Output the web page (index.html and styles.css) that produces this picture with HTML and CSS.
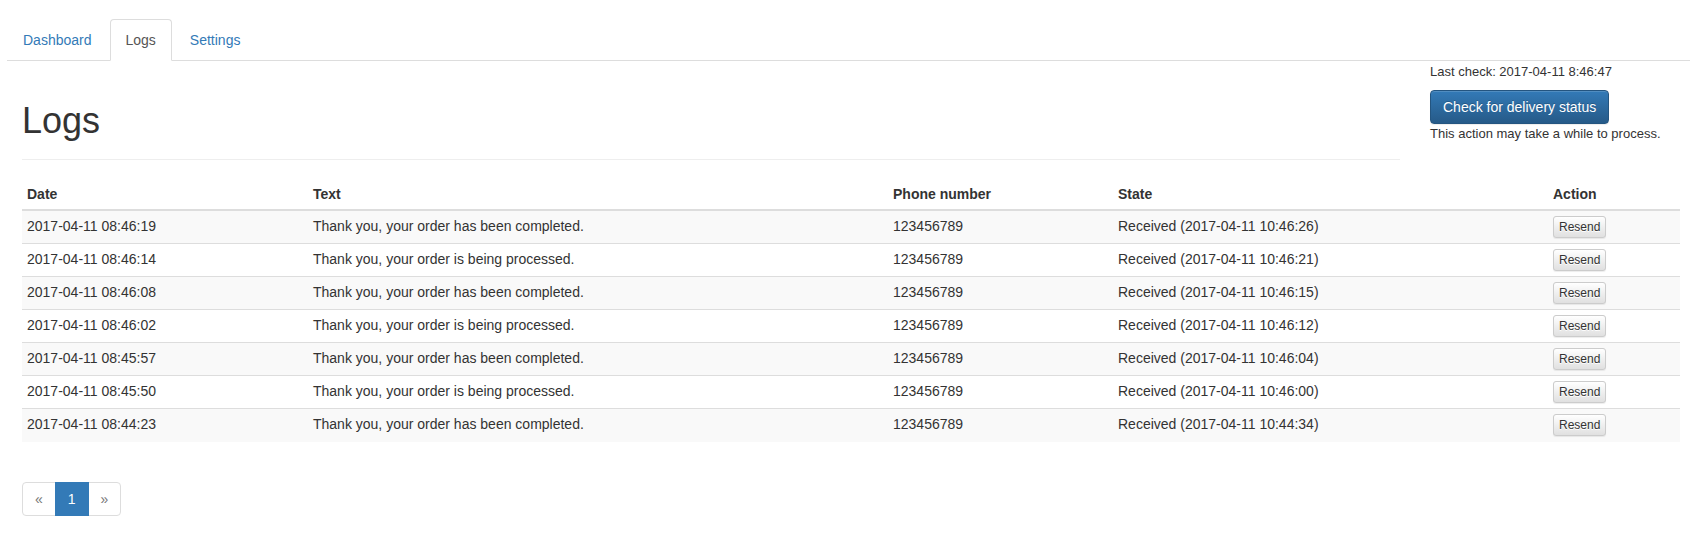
FILE: index.html
```html
<!DOCTYPE html>
<html lang="en">
<head>
<meta charset="utf-8">
<title>Logs</title>
<link rel="stylesheet" href="styles.css">
</head>
<body>
<ul class="tabs">
  <li class="tab"><a href="#">Dashboard</a></li>
  <li class="tab active"><a href="#">Logs</a></li>
  <li class="tab"><a href="#">Settings</a></li>
</ul>
<div class="main">
  <div class="top">
    <div class="left">
      <div class="page-header"><h1>Logs</h1></div>
    </div>
    <div class="right">
      <p class="last-check">Last check: 2017-04-11 8:46:47</p>
      <button class="btn btn-primary">Check for delivery status</button>
      <p class="note">This action may take a while to process.</p>
    </div>
  </div>
  <table class="table">
    <thead>
      <tr>
        <th class="c-date">Date</th>
        <th class="c-text">Text</th>
        <th class="c-phone">Phone number</th>
        <th class="c-state">State</th>
        <th class="c-action">Action</th>
      </tr>
    </thead>
    <tbody>
      <tr><td>2017-04-11 08:46:19</td><td>Thank you, your order has been completed.</td><td>123456789</td><td>Received (2017-04-11 10:46:26)</td><td><button class="btn btn-xs">Resend</button></td></tr>
      <tr><td>2017-04-11 08:46:14</td><td>Thank you, your order is being processed.</td><td>123456789</td><td>Received (2017-04-11 10:46:21)</td><td><button class="btn btn-xs">Resend</button></td></tr>
      <tr><td>2017-04-11 08:46:08</td><td>Thank you, your order has been completed.</td><td>123456789</td><td>Received (2017-04-11 10:46:15)</td><td><button class="btn btn-xs">Resend</button></td></tr>
      <tr><td>2017-04-11 08:46:02</td><td>Thank you, your order is being processed.</td><td>123456789</td><td>Received (2017-04-11 10:46:12)</td><td><button class="btn btn-xs">Resend</button></td></tr>
      <tr><td>2017-04-11 08:45:57</td><td>Thank you, your order has been completed.</td><td>123456789</td><td>Received (2017-04-11 10:46:04)</td><td><button class="btn btn-xs">Resend</button></td></tr>
      <tr><td>2017-04-11 08:45:50</td><td>Thank you, your order is being processed.</td><td>123456789</td><td>Received (2017-04-11 10:46:00)</td><td><button class="btn btn-xs">Resend</button></td></tr>
      <tr><td>2017-04-11 08:44:23</td><td>Thank you, your order has been completed.</td><td>123456789</td><td>Received (2017-04-11 10:44:34)</td><td><button class="btn btn-xs">Resend</button></td></tr>
    </tbody>
  </table>
  <ul class="pagination">
    <li class="disabled"><a href="#">&laquo;</a></li>
    <li class="active"><a href="#">1</a></li>
    <li class="disabled"><a href="#">&raquo;</a></li>
  </ul>
</div>
</body>
</html>
```

FILE: styles.css
```css
* { box-sizing: border-box; }
html, body { margin: 0; padding: 0; }
body {
  font-family: "Liberation Sans", Arial, Helvetica, sans-serif;
  font-size: 14px;
  line-height: 20px;
  color: #333;
  background: #fff;
}
a { color: #337ab7; text-decoration: none; }

.tabs {
  list-style: none;
  margin: 19px 0 0 7px;
  padding: 0;
  display: flex;
  border-bottom: 1px solid #ddd;
}
.tab { margin-bottom: -1px; }
.tab a {
  display: block;
  padding: 10px 15px;
  margin-right: 2px;
  line-height: 20px;
  border: 1px solid transparent;
  border-radius: 4px 4px 0 0;
}
.tab.active a {
  color: #555;
  background: #fff;
  border-color: #ddd #ddd transparent;
}

.main { padding: 0 9px 0 22px; }
.top { display: flex; }
.left { width: 1378px; flex: none; }
.right { margin-left: 30px; font-size: 13px; line-height: 18px; }
.page-header {
  margin: 40px 0 19px;
  padding-bottom: 9px;
  border-bottom: 1px solid #eee;
}
h1 {
  margin: 0 0 10px;
  font-size: 36px;
  font-weight: 400;
  line-height: 39px;
  color: #333;
}
.last-check { margin: 2px 0 9px; }
.note { margin: 1px 0 0; }

.btn {
  display: inline-block;
  font-family: inherit;
  cursor: pointer;
  border: 1px solid transparent;
  border-radius: 4px;
}
.btn-primary {
  padding: 6px 12px;
  font-size: 14px;
  line-height: 20px;
  color: #fff;
  background-image: linear-gradient(to bottom, #337ab7 0, #265a88 100%);
  border-color: #245580;
  text-shadow: 0 -1px 0 rgba(0,0,0,.2);
  box-shadow: inset 0 1px 0 rgba(255,255,255,.15), 0 1px 1px rgba(0,0,0,.075);
}
.btn-xs {
  padding: 1px 5px;
  font-size: 12px;
  line-height: 18px;
  border-radius: 3px;
  color: #333;
  background-image: linear-gradient(to bottom, #fff 0, #e0e0e0 100%);
  border-color: #ccc;
  text-shadow: 0 1px 0 #fff;
  box-shadow: inset 0 1px 0 rgba(255,255,255,.15), 0 1px 1px rgba(0,0,0,.075);
  vertical-align: top;
}

.table {
  width: 1658px;
  border-collapse: collapse;
  border-spacing: 0;
  margin-bottom: 20px;
}
.table th, .table td {
  padding: 5px;
  line-height: 20px;
  text-align: left;
  vertical-align: top;
}
.table th {
  font-weight: 700;
  border-bottom: 2px solid #ddd;
}
.table td { border-top: 1px solid #ddd; height: 33px; }
.table tbody tr:first-child td { border-top: 0; height: 32px; }
.table tbody tr:nth-child(odd) { background: #f9f9f9; }
.c-date { width: 286px; }
.c-text { width: 580px; }
.c-phone { width: 225px; }
.c-state { width: 435px; }
.c-action { width: 132px; }

.pagination {
  list-style: none;
  display: flex;
  margin: 40px 0 20px;
  padding: 0;
}
.pagination li a {
  display: block;
  padding: 6px 12px;
  line-height: 20px;
  border: 1px solid #ddd;
  margin-left: -1px;
  background: #fff;
}
.pagination li.disabled a { color: #777; }
.pagination li:first-child a { margin-left: 0; border-radius: 4px 0 0 4px; }
.pagination li:last-child a { border-radius: 0 4px 4px 0; }
.pagination li.active a {
  background: #337ab7;
  border-color: #337ab7;
  color: #fff;
  position: relative;
  z-index: 1;
}
```
